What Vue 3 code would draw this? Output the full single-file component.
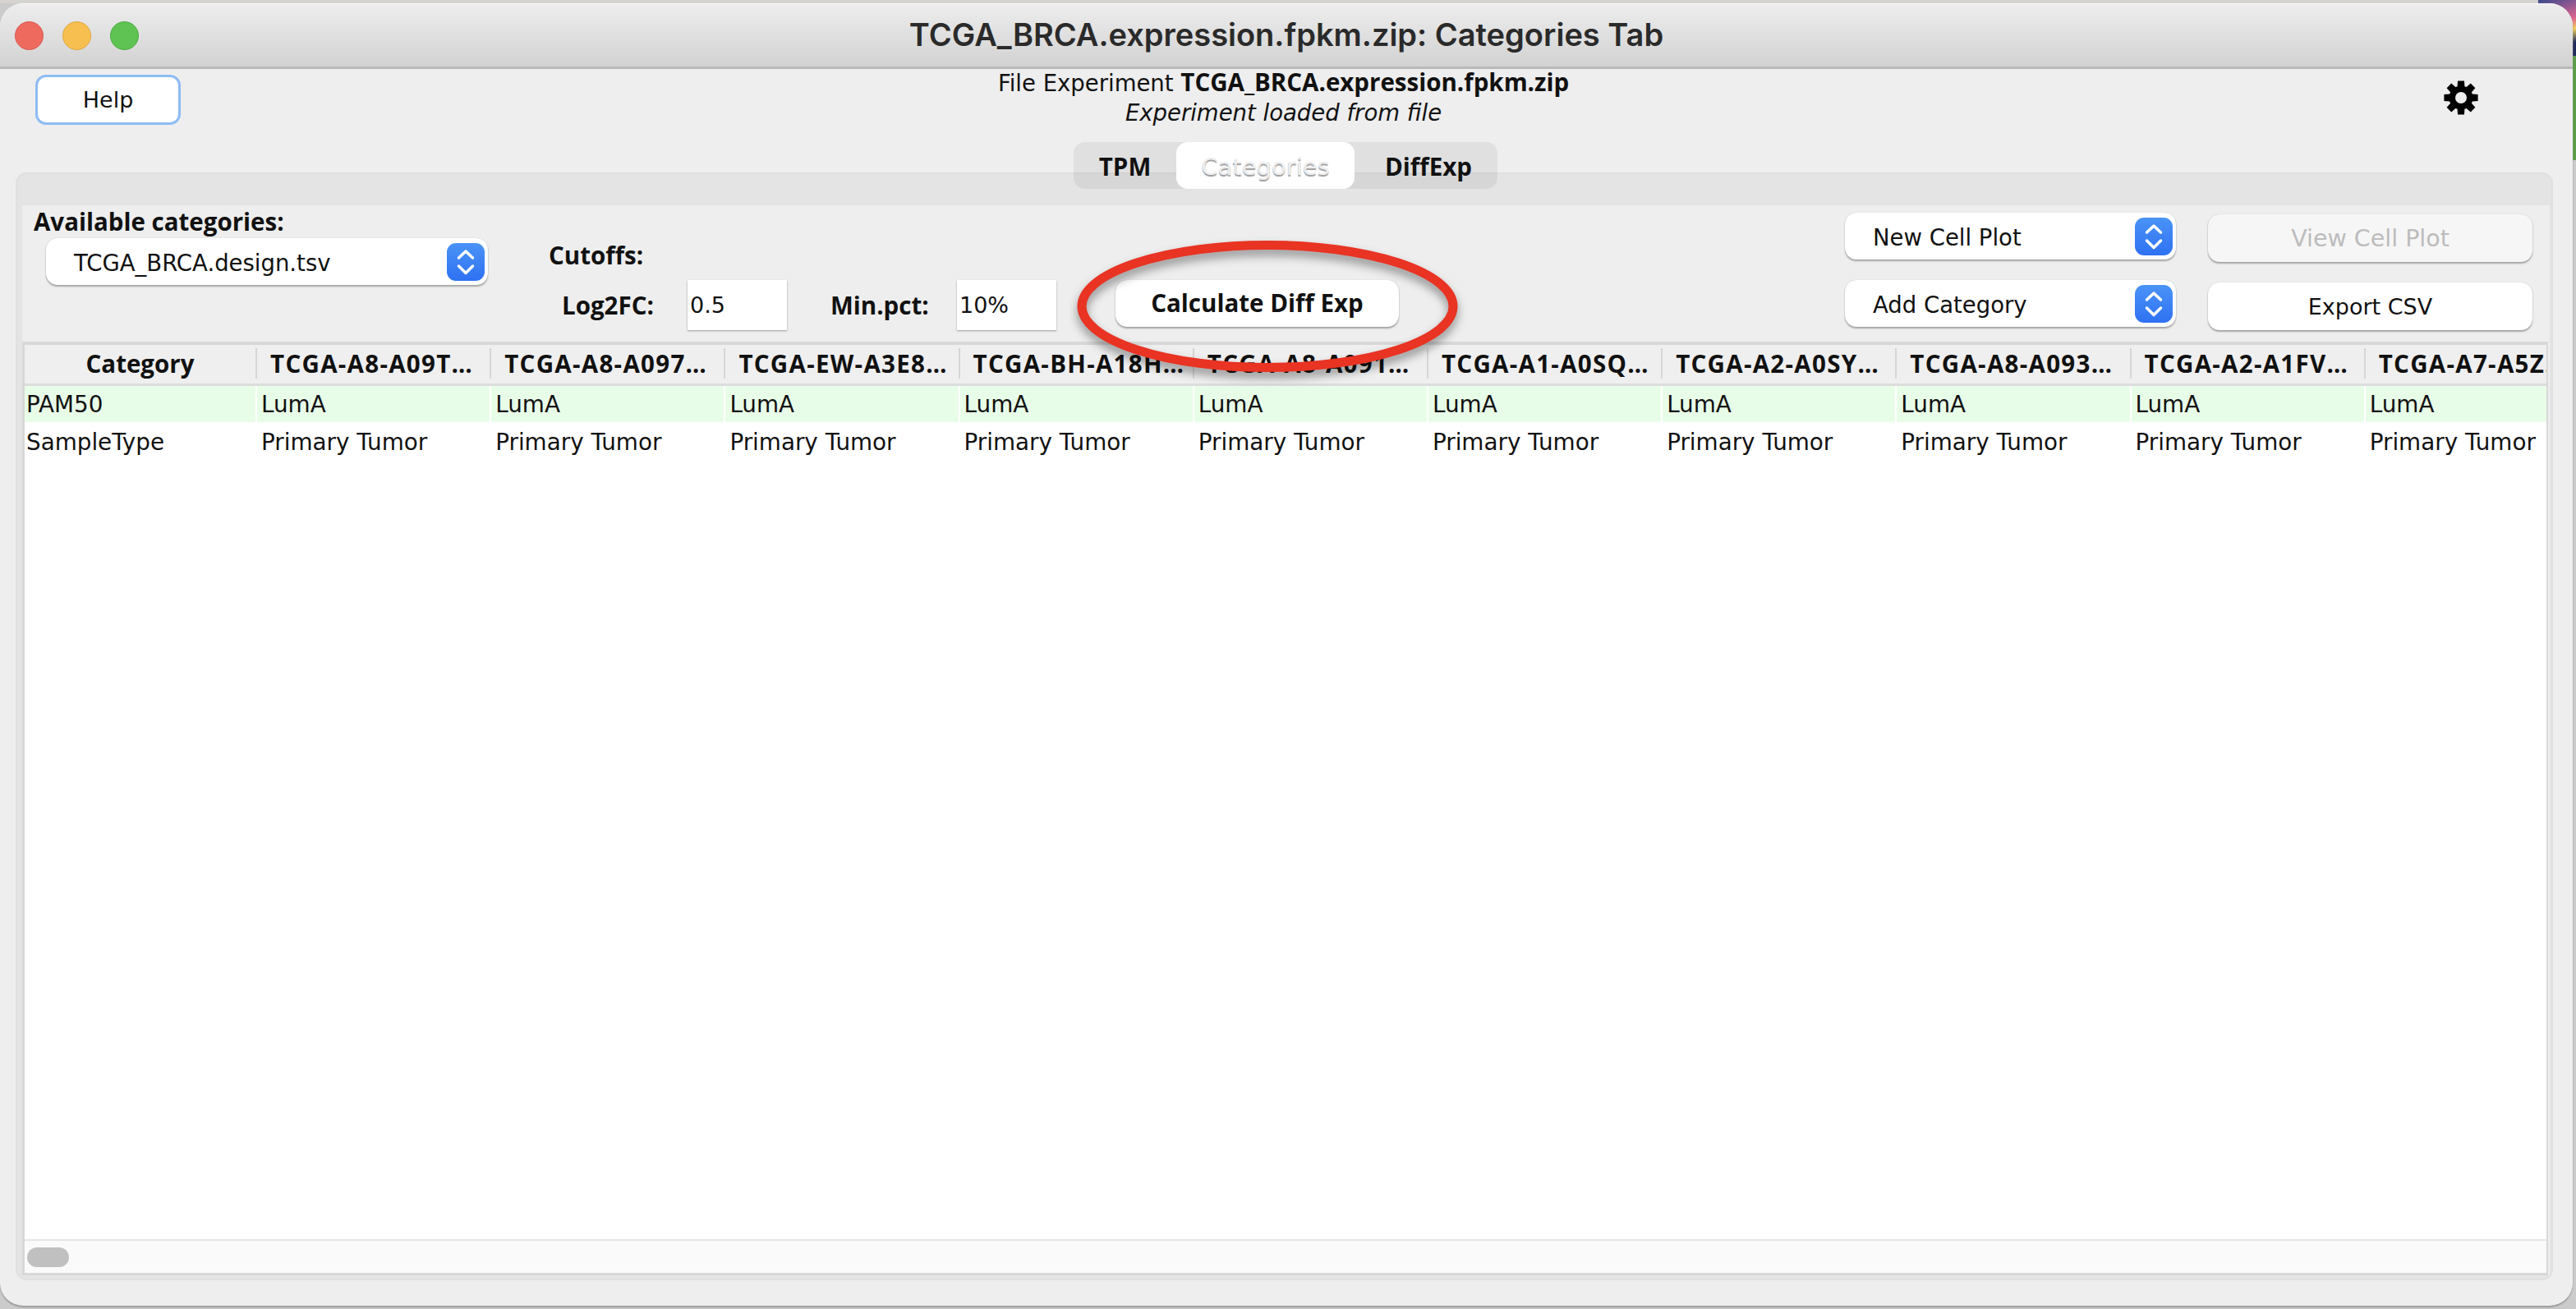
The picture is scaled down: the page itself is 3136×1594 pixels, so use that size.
<template>
  <div class="screen">
    <div class="window">
      <div class="titlebar">
        <div class="lights">
          <span class="light red"></span>
          <span class="light yellow"></span>
          <span class="light green"></span>
        </div>
        <div class="title">TCGA_BRCA.expression.fpkm.zip: Categories Tab</div>
      </div>

      <div class="head">
        <button class="help">Help</button>
        <div class="info">
          <div>File Experiment <b>TCGA_BRCA.expression.fpkm.zip</b></div>
          <div class="loaded">Experiment loaded from file</div>
        </div>
        <svg class="gear" width="42" height="42" viewBox="-21 -21 42 42">
          <path :d="gearPath" fill="#000" fill-rule="evenodd" />
        </svg>
      </div>

      <div class="tabs">
        <div class="tab tpm">TPM</div>
        <div class="tab cat">Categories</div>
        <div class="tab diff">DiffExp</div>
      </div>

      <div class="pane">
        <div class="panel">
          <div class="toolbar">
            <div class="avail">
              <div class="bold-label">Available categories:</div>
              <div class="combo design">
                <span>TCGA_BRCA.design.tsv</span>
                <svg class="stepper" width="46" height="46" viewBox="0 0 46 46">
                  <rect width="46" height="46" rx="11" fill="url(#blue1)" />
                  <path d="M14.5 18 L23 10 L31.5 18 M14.5 28 L23 36.5 L31.5 28" fill="none" stroke="#fff" stroke-width="3.5" stroke-linecap="round" stroke-linejoin="round" />
                  <defs>
                    <linearGradient id="blue1" x1="0" y1="0" x2="0" y2="1">
                      <stop offset="0" stop-color="#4a93f7" />
                      <stop offset="1" stop-color="#2f71f2" />
                    </linearGradient>
                  </defs>
                </svg>
              </div>
            </div>

            <div class="cutoffs">
              <div class="bold-label">Cutoffs:</div>
              <div class="cutoff-row">
                <label class="bold-label log">Log2FC:</label>
                <input class="num" value="0.5" />
                <label class="bold-label pct">Min.pct:</label>
                <input class="num" value="10%" />
              </div>
            </div>

            <button class="btn calc">Calculate Diff Exp</button>

            <div class="right-combos">
              <div class="combo" v-for="c in ['New Cell Plot', 'Add Category']" :key="c">
                <span>{{ c }}</span>
                <svg class="stepper" width="46" height="46" viewBox="0 0 46 46">
                  <rect width="46" height="46" rx="11" fill="url(#blue1)" />
                  <path d="M14.5 18 L23 10 L31.5 18 M14.5 28 L23 36.5 L31.5 28" fill="none" stroke="#fff" stroke-width="3.5" stroke-linecap="round" stroke-linejoin="round" />
                </svg>
              </div>
            </div>

            <div class="right-btns">
              <button class="btn off">View Cell Plot</button>
              <button class="btn">Export CSV</button>
            </div>
          </div>

          <div class="table">
            <div class="grid-wrap">
              <div class="row header">
                <div class="cell first">Category</div>
                <div class="cell" v-for="s in samples" :key="s">{{ s }}</div>
              </div>
              <div class="row pam">
                <div class="cell first">PAM50</div>
                <div class="cell" v-for="s in samples" :key="s">LumA</div>
              </div>
              <div class="row">
                <div class="cell first">SampleType</div>
                <div class="cell" v-for="s in samples" :key="s">Primary Tumor</div>
              </div>
            </div>
            <div class="hscroll"><span class="thumb"></span></div>
          </div>
        </div>
      </div>
    </div>

    <svg class="circle" width="480" height="190" viewBox="0 0 480 190">
      <ellipse cx="232" cy="85" rx="226" ry="74.5" fill="none" stroke="#e93323" stroke-width="11" />
    </svg>
  </div>
</template>

<script setup>
import { computed } from 'vue'

const samples = [
  'TCGA-A8-A09T…',
  'TCGA-A8-A097…',
  'TCGA-EW-A3E8…',
  'TCGA-BH-A18H…',
  'TCGA-A8-A091…',
  'TCGA-A1-A0SQ…',
  'TCGA-A2-A0SY…',
  'TCGA-A8-A093…',
  'TCGA-A2-A1FV…',
  'TCGA-A7-A5Z…',
]

// 8 tooth gear with a round hole
const gearPath = computed(() => {
  const pts = []
  for (let i = 0; i < 8; i++) {
    const a = (i * Math.PI) / 4 - Math.PI / 2
    const steps = [
      [-0.31, 14.5],
      [-0.19, 21],
      [0.19, 21],
      [0.31, 14.5],
    ]
    for (const [d, r] of steps) {
      pts.push(`${(Math.cos(a + d) * r).toFixed(2)} ${(Math.sin(a + d) * r).toFixed(2)}`)
    }
  }
  const hole = 'M7 0 A7 7 0 1 0 -7 0 A7 7 0 1 0 7 0 Z'
  return `M${pts.join(' L')} Z ${hole}`
})
</script>

<style>
html,
body {
  margin: 0;
  background: #cbcbcb;
}
</style>

<style scoped>
.screen {
  position: relative;
  width: 3136px;
  height: 1594px;
  box-sizing: border-box;
  padding: 4px 4px 4px 0;
  overflow: hidden;
  font-family: "DejaVu Sans", sans-serif;
  font-size: 27px;
  color: #111;
  background:
    linear-gradient(160deg, #3b4a8e 0%, #e0658f 45%, #f3d05a 60%, #1f2a5c 80%) right top / 46px 68px no-repeat,
    linear-gradient(#5a9e48, #5a9e48) right 68px / 4px 127px no-repeat,
    linear-gradient(#d6d4d0, #d6d4d0) left top / 100% 4px no-repeat,
    #cbcbcb;
}

.window {
  display: flex;
  flex-direction: column;
  height: 1586px;
  border-radius: 28px;
  overflow: hidden;
  background: #eeeeee;
  box-shadow: 0 2px 2px #9a9a9a;
}

.titlebar {
  position: relative;
  flex: none;
  height: 74px;
  display: flex;
  align-items: center;
  justify-content: center;
  padding-bottom: 2px;
  box-sizing: content-box;
  background: linear-gradient(#ededed, #d2d2d2);
  border-top: 1px solid #fafafa;
  border-bottom: 3px solid #b9b9b9;
}

.lights {
  position: absolute;
  left: 18px;
  top: 21px;
  display: flex;
  gap: 23px;
}

.light {
  width: 33px;
  height: 33px;
  border-radius: 50%;
  border: 1px solid transparent;
}

.red {
  background: #ee6a5f;
  border-color: #d9574d;
}

.yellow {
  background: #f6bf50;
  border-color: #dfa73f;
}

.green {
  background: #5ec353;
  border-color: #4dab43;
}

.title {
  font-family: Inter, sans-serif;
  font-weight: 600;
  font-size: 38px;
  color: #2a2a2a;
}

.head {
  position: relative;
  flex: none;
  height: 89px;
  display: flex;
  justify-content: center;
}

.help {
  position: absolute;
  left: 43px;
  top: 7px;
  width: 177px;
  height: 61px;
  box-sizing: border-box;
  background: #fff;
  border: 3px solid #8ebcf2;
  border-radius: 13px;
  font: inherit;
  color: #111;
}

.info {
  margin-top: -2px;
  margin-right: 7px;
  text-align: center;
  line-height: 36px;
  font-size: 27.5px;
}

.info b {
  font-family: "Open Sans", sans-serif;
  font-size: 29.5px;
}

.loaded {
  font-style: italic;
}

.gear {
  position: absolute;
  left: 2975px;
  top: 14px;
}

.tabs {
  flex: none;
  position: relative;
  z-index: 1;
  align-self: flex-start;
  margin: 0 0 -20px 1307px;
  height: 57px;
  display: flex;
  border-radius: 14px;
  background: rgba(0, 0, 0, 0.06);
  font-family: "Open Sans", sans-serif;
  font-weight: 700;
  font-size: 29.5px;
}

.tab {
  display: flex;
  align-items: center;
  justify-content: center;
  padding-top: 2px;
  box-sizing: border-box;
}

.tpm {
  width: 125px;
}

.cat {
  width: 217px;
  background: #fff;
  border-radius: 14px;
  font-family: "DejaVu Sans", sans-serif;
  font-weight: 400;
  font-size: 29px;
  color: #eeeeee;
  text-shadow: 0 2px 1px #9c9c9c;
}

.diff {
  width: 174px;
  padding-left: 6px;
}

.pane {
  flex: 1;
  min-height: 0;
  display: flex;
  margin: 0 24px 31px 19px;
  padding: 40px 4px 6px 8px;
  background: #e4e4e4;
  border-radius: 14px;
  box-shadow: inset 0 0 0 2px #e0e0e0;
}

.panel {
  flex: 1;
  min-width: 0;
  display: flex;
  flex-direction: column;
  background: #eeeeee;
}

.toolbar {
  flex: none;
  height: 166px;
  display: flex;
}

.bold-label {
  font-family: "Open Sans", sans-serif;
  font-weight: 700;
  font-size: 29.5px;
  color: #111;
}

.avail {
  width: 567px;
  padding-left: 14px;
  box-sizing: content-box;
}

.avail .bold-label {
  line-height: 40px;
}

.combo {
  display: flex;
  align-items: center;
  justify-content: space-between;
  box-sizing: border-box;
  width: 403px;
  height: 57px;
  padding: 0 4px 0 34px;
  background: #fff;
  border-radius: 14px;
  box-shadow: 0 2px 2px rgba(0, 0, 0, 0.3), 0 0 1px rgba(0, 0, 0, 0.25);
  font-size: 27.5px;
}

.combo span {
  padding-top: 2px;
}

.design {
  width: 538px;
  margin-left: 15px;
  padding-left: 34px;
}

.stepper {
  flex: none;
}

.cutoffs {
  margin-left: 60px;
  padding-top: 43px;
  width: 630px;
}

.cutoffs > .bold-label {
  line-height: 36px;
}

.cutoff-row {
  display: flex;
  align-items: center;
  height: 61px;
  margin-top: 12px;
  padding-left: 16px;
}

.log {
  width: 153px;
}

.pct {
  width: 154px;
  margin-left: 53px;
}

.num {
  width: 121px;
  height: 61px;
  box-sizing: border-box;
  padding: 0 3px;
  border: none;
  outline: none;
  background: #fff;
  box-shadow: 0 1px 2px rgba(0, 0, 0, 0.35);
  font: inherit;
  color: #111;
}

.btn {
  display: block;
  box-sizing: border-box;
  height: 57px;
  border: none;
  background: #fff;
  border-radius: 14px;
  box-shadow: 0 2px 2px rgba(0, 0, 0, 0.3), 0 0 1px rgba(0, 0, 0, 0.25);
  font: inherit;
  color: #111;
}

.calc {
  margin: 91px 0 0 60px;
  width: 345px;
  font-family: "Open Sans", sans-serif;
  font-weight: 700;
  font-size: 29.5px;
  padding-bottom: 4px;
}

.right-combos {
  margin-left: 543px;
  padding-top: 9px;
  display: flex;
  flex-direction: column;
  gap: 25px;
}

.right-btns {
  margin-left: 39px;
  padding-top: 11px;
  width: 395px;
  display: flex;
  flex-direction: column;
  gap: 25px;
}

.right-btns .btn {
  height: 58px;
}

.off {
  background: #f6f6f6 !important;
  color: #bcbcbc !important;
  font-size: 28.5px !important;
}

.table {
  flex: 1;
  min-height: 0;
  display: flex;
  flex-direction: column;
  overflow: hidden;
  background: #fff;
  border: 3px solid #d8d8d8;
  border-top-width: 4px;
  border-right-width: 2px;
  margin-right: 2px;
}

.grid-wrap {
  flex: 1;
  min-height: 0;
  overflow: hidden;
}

.row {
  display: flex;
  height: 46px;
  line-height: 45px;
  font-size: 27.8px;
}

.cell {
  flex: none;
  width: 285.2px;
  box-sizing: border-box;
  padding-left: 5px;
  white-space: nowrap;
  overflow: hidden;
  border-right: 2px solid #fff;
}

.cell.first {
  width: 283px;
  padding-left: 2px;
}

.header {
  height: 50px;
  background: #efefef;
  border-bottom: 3px solid #dcdcdc;
  box-sizing: border-box;
  font-family: "Open Sans", sans-serif;
  font-weight: 700;
  font-size: 29.5px;
}

.header .cell {
  height: 37px;
  line-height: 37px;
  margin-top: 4px;
  padding-left: 16px;
  letter-spacing: 1.3px;
  overflow: visible;
  border-right: 2px solid #d6d6d6;
}

.header .cell:last-child {
  border-right: none;
}

.header .cell.first {
  padding-left: 0;
  letter-spacing: 0;
  text-align: center;
}

.pam .cell {
  height: 44px;
  background: #e8fde8;
}

.hscroll {
  flex: none;
  height: 41px;
  box-sizing: border-box;
  display: flex;
  align-items: center;
  padding: 0 0 0 3px;
  background: #fafafa;
  border-top: 2px solid #e6e6e6;
}

.thumb {
  width: 51px;
  height: 24px;
  border-radius: 12px;
  background: #c0c0c0;
}

.circle {
  position: absolute;
  left: 1311px;
  top: 288px;
  filter: drop-shadow(0 7px 6px rgba(0, 0, 0, 0.4));
}
</style>
